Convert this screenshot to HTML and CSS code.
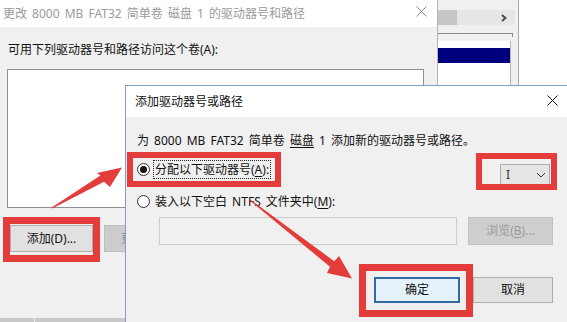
FILE: index.html
```html
<!DOCTYPE html>
<html lang="zh-CN">
<head>
<meta charset="utf-8">
<title>添加驱动器号或路径</title>
<link rel="stylesheet" href="styles.css">
</head>
<body>
<div class="desk">

  <div class="win dm">
    <div class="dm-panel">
      <div class="dm-scroll">
        <div class="dm-thumb"></div>
        <div class="dm-track">
          <svg class="dm-arrow" width="6" height="8" viewBox="0 0 6 8"><path d="M1 1 L4.5 4 L1 7" fill="none" stroke="#444" stroke-width="1.8"/></svg>
        </div>
      </div>
      <div class="dm-rule"></div>
      <div class="dm-list">
        <div class="dm-sel"></div>
      </div>
    </div>
  </div>

  <div class="win back">
    <div class="tb">
      <span class="tb-title">更改 8000 MB FAT32 简单卷 磁盘 1 的驱动器号和路径</span>
      <span class="tb-close">
        <svg width="11" height="11" viewBox="0 0 11 11"><path d="M0.5 0.5 L10.5 10.5 M10.5 0.5 L0.5 10.5" stroke="#8a8a8a" stroke-width="1"/></svg>
      </span>
    </div>
    <div class="back-body">
      <div class="back-label">可用下列驱动器号和路径访问这个卷(A):</div>
      <div class="listbox"></div>
      <div class="back-btns">
        <div class="btn">添加(D)...</div>
        <div class="btn btn-gray">更改(C)...</div>
      </div>
      <div class="back-foot">
        <div class="foot-a"></div>
        <div class="foot-b"></div>
      </div>
    </div>
  </div>

  <div class="win front">
    <div class="tb tb-front">
      <span class="tb-title">添加驱动器号或路径</span>
      <span class="tb-close front-close">
        <svg width="11" height="11" viewBox="0 0 11 11"><path d="M0.5 0.5 L10.5 10.5 M10.5 0.5 L0.5 10.5" stroke="#111" stroke-width="1"/></svg>
      </span>
    </div>
    <div class="front-body">
      <div class="intro">为 8000 MB FAT32 简单卷 <span class="ul">磁盘</span> 1 添加新的驱动器号或路径。</div>
      <div class="row row1">
        <span class="radio checked"></span>
        <span class="opt focus">分配以下驱动器号(<span class="ul">A</span>):</span>
        <div class="combo">
          <span class="combo-val">I</span>
          <svg class="combo-chev" width="10" height="6" viewBox="0 0 10 6"><path d="M1 1 L5 5 L9 1" fill="none" stroke="#333" stroke-width="1"/></svg>
        </div>
      </div>
      <div class="row row2">
        <span class="radio"></span>
        <span class="opt">装入以下空白 NTFS 文件夹中(<span class="ul">M</span>):</span>
      </div>
      <div class="row row3">
        <div class="pathbox"></div>
        <div class="btn btn-dis">浏览(<span class="ul">B</span>)...</div>
      </div>
      <div class="row row4">
        <div class="btn btn-ok">确定</div>
        <div class="btn btn-cancel">取消</div>
      </div>
    </div>
  </div>

  <div class="annot">
    <div class="mark mark-add"></div>
    <div class="mark mark-radio"></div>
    <div class="mark mark-combo"></div>
    <div class="mark mark-ok"></div>
    <svg class="arrows" width="567" height="322" viewBox="0 0 567 322">
      <polygon fill="#e43b3b" points="52.3,208.4 104,181.8 110,187 122,167.5 97,173 100.4,175.6 51.7,207.6"/>
      <polygon fill="#e43b3b" points="249.7,200.4 330,266.8 327,273 352,278.5 339,256 334.2,261.2 250.3,199.6"/>
    </svg>
  </div>

</div>
</body>
</html>
```

FILE: styles.css
```css
* { box-sizing: border-box; }

html, body {
  margin: 0;
  padding: 0;
}

body {
  width: 567px;
  height: 322px;
  overflow: hidden;
  background: #ffffff;
  font-family: "Noto Sans", "Noto Sans CJK SC", sans-serif;
  font-size: 12px;
  line-height: 16px;
  word-spacing: 2px;
  color: #000;
}

.desk {
  position: relative;
  width: 567px;
  height: 322px;
  overflow: hidden;
}

.win {
  position: absolute;
}

/* ---------- background disk management window ---------- */
.dm {
  left: 437px;
  top: 0;
  width: 130px;
  height: 90px;
  background: #ffffff;
}

.dm-panel {
  width: 82px;
  height: 90px;
  background: #f0f0f0;
  border-right: 1px solid #a9a9a9;
  padding-top: 10px;
}

.dm-scroll {
  display: flex;
  height: 15px;
  width: 78px;
}

.dm-thumb {
  width: 20px;
  background: #c6c6c6;
}

.dm-track {
  flex: 1;
  background: #e6e6e6;
  display: flex;
  align-items: center;
  justify-content: flex-end;
  padding-right: 8px;
}

.dm-rule {
  margin-top: 8px;
  width: 76px;
  height: 4px;
  border-top: 1px solid #8c8c8c;
  border-right: 1px solid #8c8c8c;
}

.dm-list {
  margin-top: 4px;
  width: 74px;
  height: 60px;
  background: #ffffff;
  border-right: 1px solid #b5b5b5;
  padding-top: 7px;
}

.dm-sel {
  height: 15px;
  background: #00007f;
}

/* ---------- back dialog ---------- */
.back {
  left: 0;
  top: 0;
  width: 438px;
  height: 322px;
  background: #f0f0f0;
  border-right: 1px solid #b4b4b4;
}

.tb {
  display: flex;
  align-items: center;
  height: 27px;
  background: #ffffff;
  padding-left: 3px;
}

.tb-title {
  color: #9a9a9a;
  white-space: nowrap;
}

.tb-close {
  margin-left: auto;
  width: 32px;
  display: flex;
  justify-content: center;
  align-items: center;
  margin-bottom: 4px;
}

.back-body {
  padding: 15px 0 0 7px;
}

.back-label {
  padding-left: 1px;
  height: 16px;
  white-space: nowrap;
  color: #111;
}

.listbox {
  margin-top: 11px;
  width: 417px;
  height: 139px;
  background: #ffffff;
  border: 1px solid #8e8f94;
}

.back-btns {
  display: flex;
  gap: 11px;
  margin-top: 17px;
  padding-left: 3px;
}

.btn {
  display: flex;
  align-items: center;
  justify-content: center;
  height: 27px;
  width: 83px;
  background: #e1e1e1;
  border: 1px solid #adadad;
  white-space: nowrap;
  word-spacing: 0;
  color: #111;
}

.btn-gray {
  background: #cccccc;
  border-color: #bfbfbf;
  color: #8a8a8a;
}

.back-foot {
  display: flex;
  margin-top: 66px;
  margin-left: -7px;
  height: 6px;
}

.foot-a {
  width: 35px;
  background: #c9c9c9;
  border-right: 1px solid #e8e8e8;
}

.foot-b {
  flex: 1;
  background: #c9c9c9;
}

/* ---------- front dialog ---------- */
.front {
  left: 125px;
  top: 85px;
  width: 470px;
  height: 250px;
  background: #f0f0f0;
  border: 1px solid #7d9fc5;
}

.tb-front {
  height: 31px;
  padding-left: 9px;
}

.tb-front .tb-title {
  color: #111;
}

.front-close {
  margin-left: auto;
  width: 20px;
  margin-right: 32px;
  margin-bottom: 2px;
}

.front-body {
  width: 427px;
  padding: 16px 0 0 11px;
}

.intro {
  height: 16px;
  white-space: nowrap;
  color: #111;
}

.ul {
  text-decoration: underline;
  text-underline-offset: 2px;
}

.row {
  display: flex;
  align-items: flex-start;
}

.row1 {
  margin-top: 11px;
}

.row2 {
  margin-top: 6px;
}

.row3 {
  margin-top: 6px;
}

.row4 {
  margin-top: 32px;
  justify-content: flex-end;
  gap: 13px;
}

.radio {
  width: 13px;
  height: 13px;
  margin-top: 3px;
  margin-right: 3px;
  border: 1px solid #333;
  border-radius: 50%;
  background: #ffffff;
  display: flex;
  align-items: center;
  justify-content: center;
  flex: none;
}

.radio.checked::after {
  content: "";
  width: 7px;
  height: 7px;
  border-radius: 50%;
  background: #111;
}

.opt {
  height: 19px;
  padding: 1px 1px 0 1px;
  border: 1px dotted transparent;
  white-space: nowrap;
  color: #111;
}

.opt.focus {
  border-color: #222;
}

.combo {
  margin-left: auto;
  margin-right: 3px;
  margin-top: 4px;
  width: 50px;
  height: 22px;
  background: #e5e5e5;
  border: 1px solid #adadad;
  display: flex;
  align-items: center;
  padding-left: 5px;
  padding-right: 3px;
}

.combo-val {
  color: #333;
}

.combo-chev {
  margin-left: auto;
}

.pathbox {
  margin-left: 22px;
  width: 298px;
  height: 28px;
  background: #f0f0f0;
  border: 1px solid #cccccc;
}

.btn-dis {
  margin-left: 11px;
  width: 85px;
  height: 28px;
  background: #cfcfcf;
  border-color: #c2c2c2;
  color: #9a9a9a;
}

.btn-ok {
  width: 86px;
  height: 26px;
  background: #e5f1fb;
  border: 2px solid #2f6aa3;
}

.btn-cancel {
  width: 80px;
  height: 26px;
}

/* ---------- annotations ---------- */
.annot {
  position: absolute;
  left: 0;
  top: 0;
  width: 567px;
  height: 322px;
  pointer-events: none;
}

.mark {
  position: absolute;
  border: 7px solid #e43b3b;
}

.mark-add {
  left: 3px;
  top: 217px;
  width: 97px;
  height: 45px;
}

.mark-radio {
  left: 127px;
  top: 152px;
  width: 154px;
  height: 35px;
  border-width: 6px;
}

.mark-combo {
  left: 476px;
  top: 153px;
  width: 81px;
  height: 37px;
  border-width: 6px;
}

.mark-ok {
  left: 359px;
  top: 264px;
  width: 114px;
  height: 53px;
}

.arrows {
  position: absolute;
  left: 0;
  top: 0;
}
```
